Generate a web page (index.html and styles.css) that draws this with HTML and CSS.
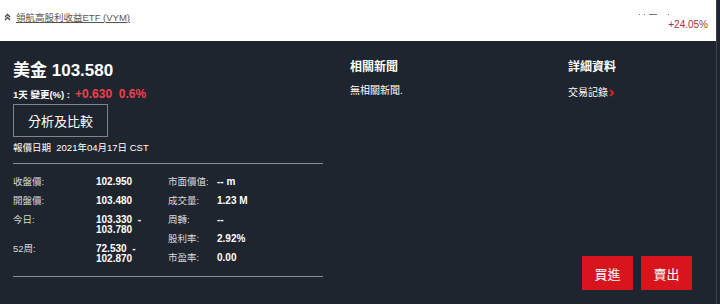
FILE: index.html
```html
<!DOCTYPE html>
<html lang="zh-Hant">
<head>
<meta charset="utf-8">
<title>VYM</title>
<link rel="stylesheet" href="styles.css">
</head>
<body>
<div class="page">
  <div class="topbar">
    <div class="crumb">
      <svg class="chev" width="7" height="8" viewBox="0 0 7 8"><path d="M1 4 L3.5 1.5 L6 4 M1 7 L3.5 4.5 L6 7" fill="none" stroke="#444" stroke-width="1.3"/></svg>
      <a class="fund-link" href="#">領航高股利收益ETF (VYM)</a>
    </div>
    <div class="perf">
      <div class="perf-clip"><i class="bit b1"></i><i class="bit b2"></i><i class="bit b3"></i><i class="bit b4"></i></div>
      <div class="perf-val">+24.05%</div>
    </div>
  </div>
  <div class="panel">
    <div class="col col-main">
      <div class="price">美金 103.580</div>
      <div class="change"><span class="change-label">1天 變更(%) :</span><span class="change-val">+0.630&nbsp; 0.6%</span></div>
      <button class="compare">分析及比較</button>
      <div class="date">報價日期&nbsp; 2021年04月17日 CST</div>
      <div class="stats">
        <dl class="stat-col stat-left">
          <dt>收盤價:</dt><dd>102.950</dd>
          <dt>開盤價:</dt><dd>103.480</dd>
          <dt>今日:</dt><dd>103.330&nbsp; -<br>103.780</dd>
          <dt>52周:</dt><dd>72.530&nbsp; -<br>102.870</dd>
        </dl>
        <dl class="stat-col stat-right">
          <dt>市面價值:</dt><dd>-- m</dd>
          <dt>成交量:</dt><dd>1.23 M</dd>
          <dt>周轉:</dt><dd>--</dd>
          <dt>股利率:</dt><dd>2.92%</dd>
          <dt>市盈率:</dt><dd>0.00</dd>
        </dl>
      </div>
    </div>
    <div class="col col-news">
      <h2 class="head">相關新聞</h2>
      <p class="note">無相關新聞.</p>
    </div>
    <div class="col col-detail">
      <h2 class="head">詳細資料</h2>
      <a class="trade-link" href="#">交易記錄<svg class="arrow" width="6" height="8" viewBox="0 0 6 8"><path d="M1.2 1 L4.2 4 L1.2 7" fill="none" stroke="#e0202a" stroke-width="1.8"/></svg></a>
      <div class="actions">
        <button class="trade">買進</button>
        <button class="trade">賣出</button>
      </div>
    </div>
  </div>
</div>
</body>
</html>
```
FILE: styles.css
```css
* { box-sizing: border-box; }
html, body { margin: 0; padding: 0; }
body {
  width: 720px;
  height: 304px;
  overflow: hidden;
  font-family: "Liberation Sans", "Noto Sans CJK TC", sans-serif;
  background: #1f252e;
}
.page {
  width: 720px;
  height: 304px;
  display: flex;
  flex-direction: column;
}
.topbar {
  height: 41px;
  background: #fff;
  display: flex;
  justify-content: space-between;
  border-right: 1px solid #3a3f46;
  margin-right: 3px;
}
.crumb {
  display: flex;
  align-items: center;
  gap: 5px;
  padding: 10px 0 0 4px;
  height: 24px;
}
.chev { display: block; }
.fund-link {
  font-size: 9.5px;
  color: #555;
  text-decoration: underline;
  line-height: 13px;
}
.perf {
  width: 70px;
  margin-right: 8px;
  padding-top: 13px;
  display: flex;
  flex-direction: column;
  align-items: flex-end;
}
.perf-clip {
  height: 3px;
  width: 70px;
  display: flex;
  align-items: center;
  padding-left: 1px;
}
.bit {
  display: block;
  height: 1px;
  background: #777;
}
.b1 { width: 1px; }
.b2 { width: 1px; margin-left: 4px; }
.b3 { width: 8px; margin-left: 4px; }
.b4 { width: 1px; margin-left: 11px; }
.perf-val {
  font-size: 10px;
  line-height: 12px;
  color: #a8323c;
  margin-top: 3px;
}
.panel {
  flex: 1;
  display: flex;
  color: #fff;
  border-right: 1px solid #3e4550;
  margin-right: 3px;
}
.col { display: flex; flex-direction: column; }
.col-main { width: 337px; padding: 20px 0 0 13px; }
.col-news { width: 218px; padding: 18px 0 0 13px; }
.col-detail { flex: 1; padding: 18px 0 14px 13px; }
.price {
  font-size: 17px;
  font-weight: bold;
  line-height: 20px;
}
.change {
  margin-top: 7px;
  font-size: 9.5px;
  font-weight: bold;
  line-height: 13px;
}
.change-val {
  color: #f0404c;
  font-size: 12px;
  margin-left: 5px;
}
.compare {
  margin-top: 3px;
  width: 95px;
  height: 33px;
  background: transparent;
  border: 1px solid #80858c;
  color: #fff;
  font-family: inherit;
  font-size: 13px;
  padding: 0;
}
.date {
  margin-top: 5px;
  font-size: 9.5px;
  line-height: 12px;
}
.stats {
  margin-top: 9px;
  width: 310px;
  display: flex;
  border-top: 1px solid #8a8f96;
  border-bottom: 1px solid #8a8f96;
  padding: 13px 0 12px;
}
.stat-col {
  margin: 0;
  display: grid;
  row-gap: 9px;
  font-size: 9.5px;
  line-height: 10px;
  align-content: start;
}
.stat-left { width: 155px; grid-template-columns: 83px 1fr; }
.stat-right { grid-template-columns: 49px 1fr; }
.stat-col dt { color: #d8dadd; }
.stat-col dd { margin: 0; font-weight: bold; font-size: 10px; }
.head {
  margin: 0;
  font-size: 12px;
  font-weight: bold;
  line-height: 17px;
}
.note {
  margin: 8px 0 0;
  font-size: 10px;
  line-height: 13px;
}
.trade-link {
  margin-top: 10px;
  font-size: 10px;
  line-height: 13px;
  color: #fff;
  text-decoration: none;
  display: flex;
  align-items: center;
  gap: 1px;
}
.actions {
  margin-top: auto;
  display: flex;
  gap: 8px;
  padding-left: 14px;
}
.trade {
  width: 51px;
  height: 34px;
  background: #d8141c;
  border: none;
  color: #fff;
  font-family: inherit;
  font-size: 13px;
  padding: 0;
}
```
